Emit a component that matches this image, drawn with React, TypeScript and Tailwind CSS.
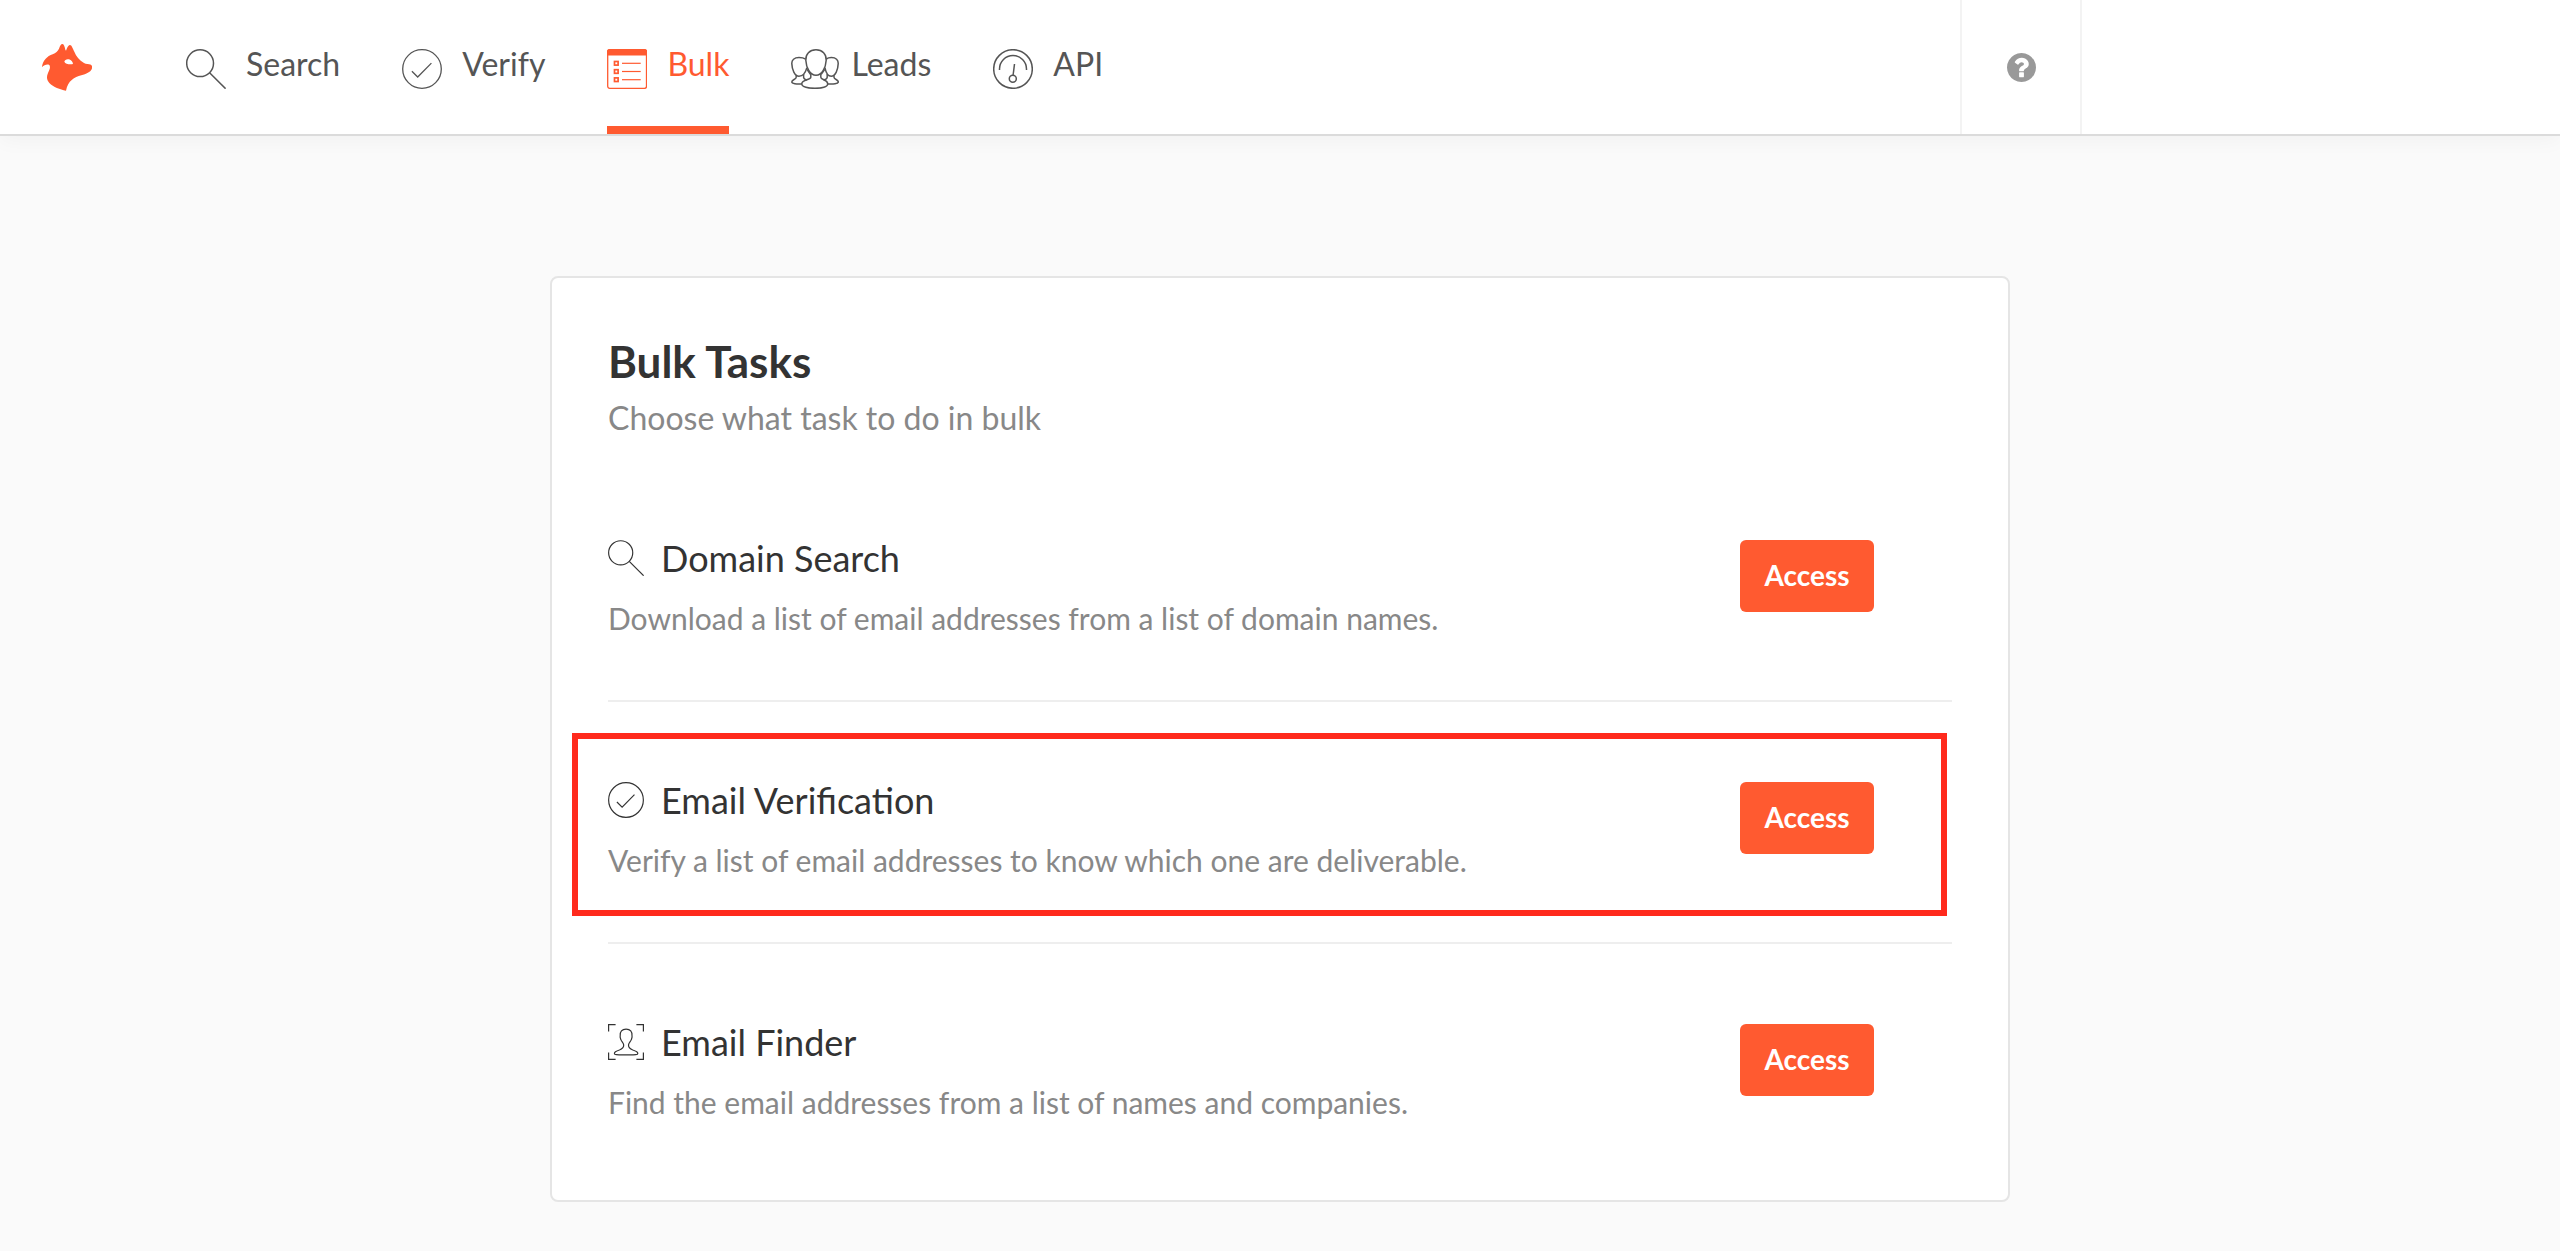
import type { ReactNode } from 'react';
import clsx from 'clsx';

type IconProps = { className?: string };

function Logo() {
  return (
    <svg viewBox="66 71 150 141" className="h-[47px] w-[50px]" fill="#ff5a30" aria-hidden="true">
      <path
        fillRule="evenodd"
        d="M66 141C67 122 82 107 98 102C108 98 113 92 117 85C120 77 123 71 127 71C131 71 134 77 136 88L138 91C141 84 144 75 149 74C155 73 158 84 163 94C168 107 178 119 192 128C198 132 206 131 213 133C217 136 217 142 215 147C211 155 199 161 184 165C163 171 144 181 138 211C120 208 100 200 88 188C80 180 79 169 84 158C89 147 92 141 88 134C81 131 72 134 66 141ZM133 124C134 118 141 115 147 117C154 119 158 124 159 131C149 133 136 131 133 124Z"
      />
    </svg>
  );
}

function SearchIcon({ className }: IconProps) {
  return (
    <svg viewBox="0 0 40 40" fill="none" stroke="currentColor" className={className} aria-hidden="true">
      <circle cx="14.1" cy="14.2" r="13.4" />
      <path d="M23.6 23.8L39.6 39.7" />
    </svg>
  );
}

function CheckIcon({ className }: IconProps) {
  return (
    <svg viewBox="0 0 40 40" fill="none" stroke="currentColor" className={className} aria-hidden="true">
      <circle cx="20" cy="20" r="19.3" />
      <path d="M9.9 22.2L15.7 28L29.4 14.1" />
    </svg>
  );
}

function BulkIcon({ className }: IconProps) {
  return (
    <svg viewBox="0 0 40 40" fill="none" stroke="currentColor" className={className} aria-hidden="true">
      <rect x=".7" y=".7" width="38.8" height="38.6" rx="2" />
      <path d="M0 6.5V2.5A2.5 2.5 0 0 1 2.5 0H37.5A2.5 2.5 0 0 1 40 2.5V6.5Z" fill="currentColor" stroke="none" />
      {[14.3, 22.5, 30.7].map((y) => (
        <g key={y}>
          <rect x="7.5" y={y - 1.8} width="3.6" height="3.6" strokeWidth="1.7" />
          <path d={`M15 ${y}H33.7`} strokeWidth="1.2" />
        </g>
      ))}
    </svg>
  );
}

function LeadsIcon({ className }: IconProps) {
  return (
    <svg viewBox="0 0 48 40" fill="none" stroke="currentColor" strokeLinejoin="round" className={className} aria-hidden="true">
      <path d="M25 .8C18.6 .8 14.5 5 14.8 11.2C15.2 18.3 18.8 26.2 25 26.2C31.2 26.2 34.8 18.3 35.2 11.2C35.5 5 31.4 .8 25 .8Z" />
      {/* front shoulders */}
      <path d="M19.8 24.2V28.2C19.8 31 11 30.6 10.8 34.6C10.7 38.2 17.5 39.3 24 39.3C30.5 39.3 36.8 38.2 36.7 34.6C36.5 30.6 29.8 31 29.8 28.2V24.2" />
      {/* left person */}
      <path d="M14.6 10.2C12.6 8.9 10.2 8.6 8 8.6C3.2 8.6 .6 11 .8 14.6C1 20.4 3.6 27.2 8 27.2C12.2 27.2 14.4 24 15.9 18.6" />
      <path d="M5.2 26.4V28.2C5.2 30.6 .8 30.4 .8 33C.8 34.8 5.6 35.2 10.8 34.9M12.6 25V28.4C12.8 29.8 14.4 30.6 16 31M16 20.4L19.4 25.4" />
      {/* right person */}
      <path d="M35.2 10.2C36.8 8.9 38.6 8.6 40.4 8.6C45 8.6 47.4 11 47.2 14.6C47 20.4 44.6 27.2 40.2 27.2C36.4 27.2 35 24 33.9 18.6" />
      <path d="M43 26.4V28.2C43 30.6 47.3 30.4 47.3 33C47.3 34.8 42.2 35.2 36.7 34.9M36.2 25V28.4C36 29.8 34.4 30.6 32.6 31M33.8 20.4L30.2 25.4" />
    </svg>
  );
}

function ApiIcon({ className }: IconProps) {
  return (
    <svg viewBox="0 0 40 40" fill="none" stroke="currentColor" className={className} aria-hidden="true">
      <circle cx="20" cy="20" r="19.3" />
      <path d="M6.5 21V20A13.5 13.5 0 0 1 33.5 20V21" />
      <path d="M21.5 15L20.1 26" />
      <circle cx="19.8" cy="29.8" r="3.5" />
    </svg>
  );
}

function FinderIcon({ className }: IconProps) {
  return (
    <svg viewBox="0 0 36 36" fill="none" stroke="currentColor" className={className} aria-hidden="true">
      <path d="M.6 7.6V.6H7.6M28.4 .6H35.4V7.6M35.4 28.4V35.4H28.4M7.6 35.4H.6V28.4" />
      <path d="M18.1 5.2C13.8 5.2 12 7.8 12.2 11.6C11.8 13.2 12.4 14.2 12.9 15.6C13.6 17.6 15.6 18.8 15.7 21C15.8 24.2 14.2 25 11.4 26C8.2 27 6.4 27.6 6.4 29.4C6.4 31 8.4 30.9 18.1 30.9C27.8 30.9 29.8 31 29.8 29.4C29.8 27.6 28 27 24.8 26C22 25 20.4 24.2 20.5 21C20.6 18.8 22.6 17.6 23.3 15.6C23.8 14.2 24.4 13.2 24 11.6C24.2 7.8 22.4 5.2 18.1 5.2Z" />
    </svg>
  );
}

function HelpIcon({ className }: IconProps) {
  return (
    <svg viewBox="0 128 1536 1536" fill="currentColor" className={className} aria-hidden="true">
      <path d="M896 1376v-192q0-14-9-23t-23-9h-192q-14 0-23 9t-9 23v192q0 14 9 23t23 9h192q14 0 23-9t9-23zm256-672q0-88-55.5-163t-138.5-116-170-41q-243 0-371 213-15 24 8 42l132 100q7 6 19 6 16 0 25-12 53-68 86-92 34-24 86-24 48 0 85.5 26t37.5 59q0 38-20 61t-68 45q-63 28-115.5 86.5t-52.5 125.5v36q0 14 9 23t23 9h192q14 0 23-9t9-23q0-19 21.5-49.5t54.5-49.5q32-18 49-28.5t46-35 44.5-48 28-60.5 12.5-81zm384 192q0 209-103 385.5t-279.5 279.5-385.5 103-385.5-103-279.5-279.5-103-385.5 103-385.5 279.5-279.5 385.5-103 385.5 103 279.5 279.5 103 385.5z" />
    </svg>
  );
}

const NAV: { label: string; icon: ReactNode; gap: string; active?: boolean }[] = [
  { label: 'Search', icon: <SearchIcon className="size-10 stroke-[1.5]" />, gap: 'gap-5' },
  { label: 'Verify', icon: <CheckIcon className="size-10 stroke-[1.3]" />, gap: 'gap-5' },
  { label: 'Bulk', icon: <BulkIcon className="size-10 stroke-[1.3]" />, gap: 'gap-5', active: true },
  { label: 'Leads', icon: <LeadsIcon className="h-10 w-12 stroke-[1.5]" />, gap: 'gap-3' },
  { label: 'API', icon: <ApiIcon className="size-10 stroke-[1.5]" />, gap: 'gap-5' },
];

const TASKS: { title: string; text: string; icon: ReactNode; highlighted?: boolean }[] = [
  {
    title: 'Domain Search',
    text: 'Download a list of email addresses from a list of domain names.',
    icon: <SearchIcon className="size-9 stroke-[1.3]" />,
  },
  {
    title: 'Email Verification',
    text: 'Verify a list of email addresses to know which one are deliverable.',
    icon: <CheckIcon className="size-9 stroke-[1.3]" />,
    highlighted: true,
  },
  {
    title: 'Email Finder',
    text: 'Find the email addresses from a list of names and companies.',
    icon: <FinderIcon className="size-9 stroke-[1.2]" />,
  },
];

function Header() {
  return (
    <header className="flex h-[136px] border-b-2 border-[#dbdbdb] bg-white shadow-[0_4px_20px_rgba(0,0,0,0.04)]">
      <a href="#" aria-label="Home" className="flex items-center pl-[42px]">
        <Logo />
      </a>
      <nav className="ml-[94px] flex gap-[62px]">
        {NAV.map((item) => (
          <a
            key={item.label}
            href="#"
            className={clsx(
              'flex items-start border-b-8 pt-[49px] text-[32px] leading-[30px]',
              item.gap,
              item.active ? 'border-[#ff5a30] text-[#ff5a30]' : 'border-transparent text-[#555]',
            )}
          >
            {item.icon}
            {item.label}
          </a>
        ))}
      </nav>
      <button
        type="button"
        aria-label="Help"
        className="mr-[478px] ml-auto flex w-[122px] items-center justify-center border-x-2 border-[#f3f3f3] text-[#999]"
      >
        <HelpIcon className="size-[29px]" />
      </button>
    </header>
  );
}

export default function App() {
  return (
    <div className="min-h-screen bg-[#fafafa] font-['Lato',sans-serif] text-[#333]">
      <Header />
      <main className="pt-[140px] pb-12">
        <section className="mx-auto max-w-[1460px] rounded-lg border-2 border-[#e5e5e5] bg-white px-14 pt-14 pb-4">
          <h1 className="text-[44px] leading-[54px] font-bold">Bulk Tasks</h1>
          <p className="mt-[10px] mb-[22px] text-[32px] leading-10 text-[#888]">Choose what task to do in bulk</p>

          <ul className="divide-y-2 divide-[#eee]">
            {TASKS.map((task) => (
              <li key={task.title} className="relative flex items-start justify-between pt-20 pr-[78px] pb-16">
                <div>
                  <h2 className="flex items-center gap-[17px] text-[36px] leading-9">
                    {task.icon}
                    {task.title}
                  </h2>
                  <p className="mt-6 text-[30px] leading-9 text-[#888]">{task.text}</p>
                </div>
                <button
                  type="button"
                  className="h-[72px] w-[134px] rounded-md bg-[#ff5a30] pb-0.5 text-[28px] font-bold text-white"
                >
                  Access
                </button>
                {task.highlighted && (
                  <div className="pointer-events-none absolute top-[31px] right-[5px] bottom-[26px] left-[-36px] border-6 border-[#ff2a1d]" />
                )}
              </li>
            ))}
          </ul>
        </section>
      </main>
    </div>
  );
}
